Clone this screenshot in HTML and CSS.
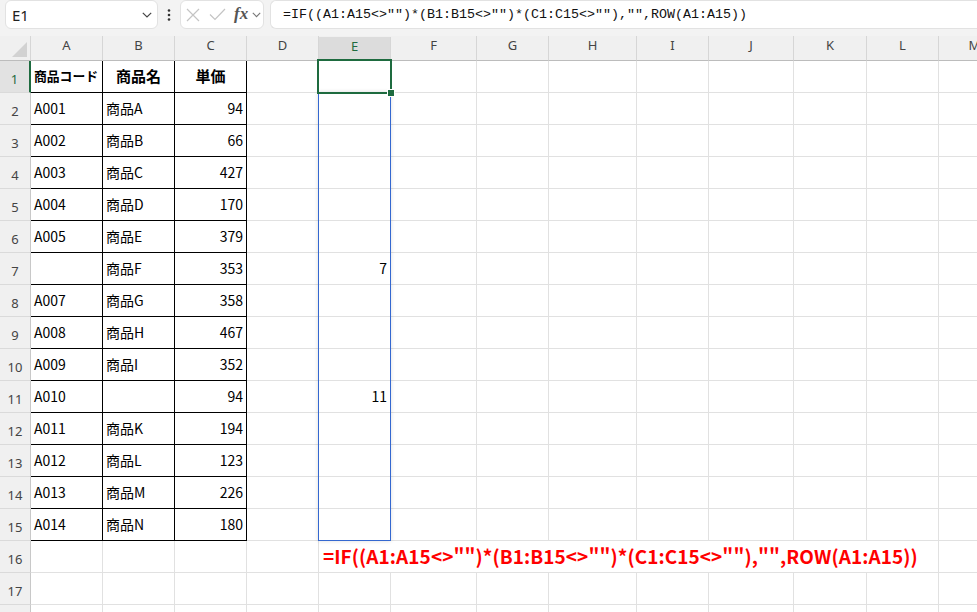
FILE: index.html
```html
<!DOCTYPE html>
<html lang="ja">
<head>
<meta charset="utf-8">
<title>Excel - FILTER rows</title>
<link rel="stylesheet" href="styles.css">
</head>
<body>
<div class="app">
  <div class="fbar">
    <div class="namebox">
      <span class="ref">E1</span>
      <svg class="chev" width="10" height="6" viewBox="0 0 10 6"><path d="M0.8 0.8L5 5L9.2 0.8" fill="none" stroke="#444" stroke-width="1.2"/></svg>
    </div>
    <div class="more">
      <svg width="4" height="14" viewBox="0 0 4 14"><circle cx="2" cy="2.5" r="1.3" fill="#333"/><circle cx="2" cy="7" r="1.3" fill="#333"/><circle cx="2" cy="11.5" r="1.3" fill="#333"/></svg>
    </div>
    <div class="fxbox">
      <svg class="ico-x" width="14" height="14" viewBox="0 0 14 14"><path d="M1 1L13 13M13 1L1 13" stroke="#c4c4c4" stroke-width="1.2" fill="none"/></svg>
      <svg class="ico-ok" width="17" height="13" viewBox="0 0 17 13"><path d="M1 6.5L6 11.5L16 1" stroke="#c4c4c4" stroke-width="1.2" fill="none"/></svg>
      <span class="fx">fx</span>
      <svg class="chev small" width="9" height="6" viewBox="0 0 9 6"><path d="M0.8 0.8L4.5 4.6L8.2 0.8" fill="none" stroke="#777" stroke-width="1.1"/></svg>
    </div>
    <div class="formula">=IF((A1:A15&lt;&gt;"")*(B1:B15&lt;&gt;"")*(C1:C15&lt;&gt;""),"",ROW(A1:A15))</div>
  </div>

  <div class="sheet">
    <div class="row head">
      <div class="corner"><svg width="31" height="24" viewBox="0 0 31 24"><path d="M27 6L27 21L12 21Z" fill="#d2d2d2"/></svg></div>
      <div class="ch">A</div><div class="ch">B</div><div class="ch">C</div><div class="ch">D</div><div class="ch sel">E</div><div class="ch">F</div><div class="ch">G</div><div class="ch">H</div><div class="ch">I</div><div class="ch">J</div><div class="ch">K</div><div class="ch">L</div><div class="ch">M</div>
    </div>

    <div class="row"><div class="rh sel">1</div><div class="c k hd small">商品コード</div><div class="c k hd">商品名</div><div class="c k hd">単価</div><div class="c"></div><div class="c"></div><div class="c"></div><div class="c"></div><div class="c"></div><div class="c"></div><div class="c"></div><div class="c"></div><div class="c"></div><div class="c"></div></div>
    <div class="row"><div class="rh">2</div><div class="c k">A001</div><div class="c k">商品A</div><div class="c k n">94</div><div class="c"></div><div class="c"></div><div class="c"></div><div class="c"></div><div class="c"></div><div class="c"></div><div class="c"></div><div class="c"></div><div class="c"></div><div class="c"></div></div>
    <div class="row"><div class="rh">3</div><div class="c k">A002</div><div class="c k">商品B</div><div class="c k n">66</div><div class="c"></div><div class="c"></div><div class="c"></div><div class="c"></div><div class="c"></div><div class="c"></div><div class="c"></div><div class="c"></div><div class="c"></div><div class="c"></div></div>
    <div class="row"><div class="rh">4</div><div class="c k">A003</div><div class="c k">商品C</div><div class="c k n">427</div><div class="c"></div><div class="c"></div><div class="c"></div><div class="c"></div><div class="c"></div><div class="c"></div><div class="c"></div><div class="c"></div><div class="c"></div><div class="c"></div></div>
    <div class="row"><div class="rh">5</div><div class="c k">A004</div><div class="c k">商品D</div><div class="c k n">170</div><div class="c"></div><div class="c"></div><div class="c"></div><div class="c"></div><div class="c"></div><div class="c"></div><div class="c"></div><div class="c"></div><div class="c"></div><div class="c"></div></div>
    <div class="row"><div class="rh">6</div><div class="c k">A005</div><div class="c k">商品E</div><div class="c k n">379</div><div class="c"></div><div class="c"></div><div class="c"></div><div class="c"></div><div class="c"></div><div class="c"></div><div class="c"></div><div class="c"></div><div class="c"></div><div class="c"></div></div>
    <div class="row"><div class="rh">7</div><div class="c k"></div><div class="c k">商品F</div><div class="c k n">353</div><div class="c"></div><div class="c n">7</div><div class="c"></div><div class="c"></div><div class="c"></div><div class="c"></div><div class="c"></div><div class="c"></div><div class="c"></div><div class="c"></div></div>
    <div class="row"><div class="rh">8</div><div class="c k">A007</div><div class="c k">商品G</div><div class="c k n">358</div><div class="c"></div><div class="c"></div><div class="c"></div><div class="c"></div><div class="c"></div><div class="c"></div><div class="c"></div><div class="c"></div><div class="c"></div><div class="c"></div></div>
    <div class="row"><div class="rh">9</div><div class="c k">A008</div><div class="c k">商品H</div><div class="c k n">467</div><div class="c"></div><div class="c"></div><div class="c"></div><div class="c"></div><div class="c"></div><div class="c"></div><div class="c"></div><div class="c"></div><div class="c"></div><div class="c"></div></div>
    <div class="row"><div class="rh">10</div><div class="c k">A009</div><div class="c k">商品I</div><div class="c k n">352</div><div class="c"></div><div class="c"></div><div class="c"></div><div class="c"></div><div class="c"></div><div class="c"></div><div class="c"></div><div class="c"></div><div class="c"></div><div class="c"></div></div>
    <div class="row"><div class="rh">11</div><div class="c k">A010</div><div class="c k"></div><div class="c k n">94</div><div class="c"></div><div class="c n">11</div><div class="c"></div><div class="c"></div><div class="c"></div><div class="c"></div><div class="c"></div><div class="c"></div><div class="c"></div><div class="c"></div></div>
    <div class="row"><div class="rh">12</div><div class="c k">A011</div><div class="c k">商品K</div><div class="c k n">194</div><div class="c"></div><div class="c"></div><div class="c"></div><div class="c"></div><div class="c"></div><div class="c"></div><div class="c"></div><div class="c"></div><div class="c"></div><div class="c"></div></div>
    <div class="row"><div class="rh">13</div><div class="c k">A012</div><div class="c k">商品L</div><div class="c k n">123</div><div class="c"></div><div class="c"></div><div class="c"></div><div class="c"></div><div class="c"></div><div class="c"></div><div class="c"></div><div class="c"></div><div class="c"></div><div class="c"></div></div>
    <div class="row"><div class="rh">14</div><div class="c k">A013</div><div class="c k">商品M</div><div class="c k n">226</div><div class="c"></div><div class="c"></div><div class="c"></div><div class="c"></div><div class="c"></div><div class="c"></div><div class="c"></div><div class="c"></div><div class="c"></div><div class="c"></div></div>
    <div class="row"><div class="rh">15</div><div class="c k">A014</div><div class="c k">商品N</div><div class="c k n">180</div><div class="c"></div><div class="c"></div><div class="c"></div><div class="c"></div><div class="c"></div><div class="c"></div><div class="c"></div><div class="c"></div><div class="c"></div><div class="c"></div></div>
    <div class="row"><div class="rh">16</div><div class="c"></div><div class="c"></div><div class="c"></div><div class="c"></div><div class="c note">=IF((A1:A15&lt;&gt;"")*(B1:B15&lt;&gt;"")*(C1:C15&lt;&gt;""),"",ROW(A1:A15))</div><div class="c"></div></div>
    <div class="row"><div class="rh">17</div><div class="c"></div><div class="c"></div><div class="c"></div><div class="c"></div><div class="c"></div><div class="c"></div><div class="c"></div><div class="c"></div><div class="c"></div><div class="c"></div><div class="c"></div><div class="c"></div><div class="c"></div></div>
    <div class="row"><div class="rh"></div><div class="c"></div><div class="c"></div><div class="c"></div><div class="c"></div><div class="c"></div><div class="c"></div><div class="c"></div><div class="c"></div><div class="c"></div><div class="c"></div><div class="c"></div><div class="c"></div><div class="c"></div></div>

    <div class="spill"></div>
    <div class="active"><span class="handle"></span></div>
  </div>
</div>
</body>
</html>
```

FILE: styles.css
```css
html, body {
  margin: 0;
  padding: 0;
  background: #ffffff;
}
body {
  width: 977px;
  height: 612px;
  overflow: hidden;
  font-family: "Noto Sans CJK JP", "Noto Sans", sans-serif;
  color: #000;
}

/* ---------- formula bar ---------- */
.fbar {
  height: 36px;
  background: #f3f3f3;
  display: flex;
  align-items: flex-start;
}
.namebox {
  margin-left: 5px;
  width: 153px;
  height: 29px;
  box-sizing: border-box;
  background: #fff;
  border: 1px solid #e2e2e2;
  border-radius: 6px;
  display: flex;
  align-items: center;
  justify-content: space-between;
  padding: 0 5px 0 6px;
}
.ref {
  font-family: "Noto Sans", sans-serif;
  font-size: 15px;
  color: #222;
}
.more {
  width: 22px;
  height: 29px;
  display: flex;
  align-items: center;
  justify-content: center;
}
.fxbox {
  width: 84px;
  height: 29px;
  box-sizing: border-box;
  background: #fff;
  border: 1px solid #e2e2e2;
  border-radius: 6px;
  display: flex;
  align-items: center;
  padding-left: 5px;
}
.ico-x { margin-right: 9px; }
.ico-ok { margin-right: 8px; }
.fx {
  font-family: "Liberation Serif", serif;
  font-style: italic;
  font-weight: bold;
  font-size: 17px;
  color: #555;
  margin-right: 4px;
  line-height: 1;
  padding-bottom: 2px;
}
.formula {
  margin-left: 6px;
  flex: 1;
  height: 29px;
  box-sizing: border-box;
  background: #fff;
  border: 1px solid #e2e2e2;
  border-right: none;
  border-radius: 6px 0 0 6px;
  padding-left: 12px;
  font-family: "Liberation Mono", monospace;
  font-size: 13.33px;
  line-height: 27px;
  color: #111;
  white-space: nowrap;
}

/* ---------- sheet ---------- */
.sheet {
  position: relative;
}
.row {
  display: grid;
  grid-template-columns: 31px 72px 72px 72px 72px 72px 86px 72px 88px 72px 85px 73px 72px 72px;
  grid-template-rows: 32px;
  height: 32px;
}
.row.head {
  grid-template-rows: 25px;
  height: 25px;
  background: #f0f0f0;
}
.corner {
  border-right: 1px solid #d6d6d6;
  border-bottom: 1px solid #bcbcbc;
  box-sizing: border-box;
}
.corner svg { display: block; }
.ch {
  box-sizing: border-box;
  border-right: 1px solid #d6d6d6;
  border-bottom: 1px solid #bcbcbc;
  font-family: "Noto Sans", sans-serif;
  font-size: 13px;
  color: #444;
  text-align: center;
  line-height: 19px;
  overflow: hidden;
}
.ch.sel {
  background: #dcdcdc;
  color: #1e6b3f;
  border-bottom: 2px solid #1e6b3f;
  margin-top: 1px;
  line-height: 18px;
}
.rh {
  box-sizing: border-box;
  background: #f0f0f0;
  border-right: 1px solid #c8c8c8;
  border-bottom: 1px solid #dadada;
  font-family: "Noto Sans", sans-serif;
  font-size: 13px;
  color: #444;
  text-align: center;
  line-height: 18px;
  padding-top: 9px;
  overflow: hidden;
}
.rh.sel {
  background: #e2e2e2;
  color: #1e6b3f;
  border-right: 2px solid #1e6b3f;
}
.c {
  box-sizing: border-box;
  border-right: 1px solid #e1e1e1;
  border-bottom: 1px solid #e1e1e1;
  font-size: 14px;
  line-height: 30px;
  padding: 0 3px;
  white-space: nowrap;
  overflow: hidden;
}
.c.k {
  border-right-color: #000;
  border-bottom-color: #000;
}
.c.n { text-align: right; }
.c.hd {
  font-weight: bold;
  font-size: 15px;
  text-align: center;
}
.c.hd.small {
  font-size: 12.8px;
  text-align: left;
  padding-left: 3px;
}
.c.note {
  grid-column: span 8;
  overflow: visible;
  color: #ff0000;
  font-weight: bold;
  font-size: 19px;
  letter-spacing: 0.07px;
  padding-left: 4px;
}

/* overlays */
.spill {
  position: absolute;
  left: 318px;
  top: 56px;
  width: 73px;
  height: 449px;
  box-sizing: border-box;
  border: 1px solid #3468d0;
  box-shadow: 0 0 4px rgba(0, 0, 0, 0.14);
  pointer-events: none;
}
.active {
  position: absolute;
  left: 317px;
  top: 23px;
  width: 75px;
  height: 35px;
  box-sizing: border-box;
  border: 2px solid #1e6b3f;
  pointer-events: none;
}
.handle {
  position: absolute;
  right: -5px;
  bottom: -5px;
  width: 6px;
  height: 6px;
  background: #1e6b3f;
  border: 1px solid #fff;
}
```
